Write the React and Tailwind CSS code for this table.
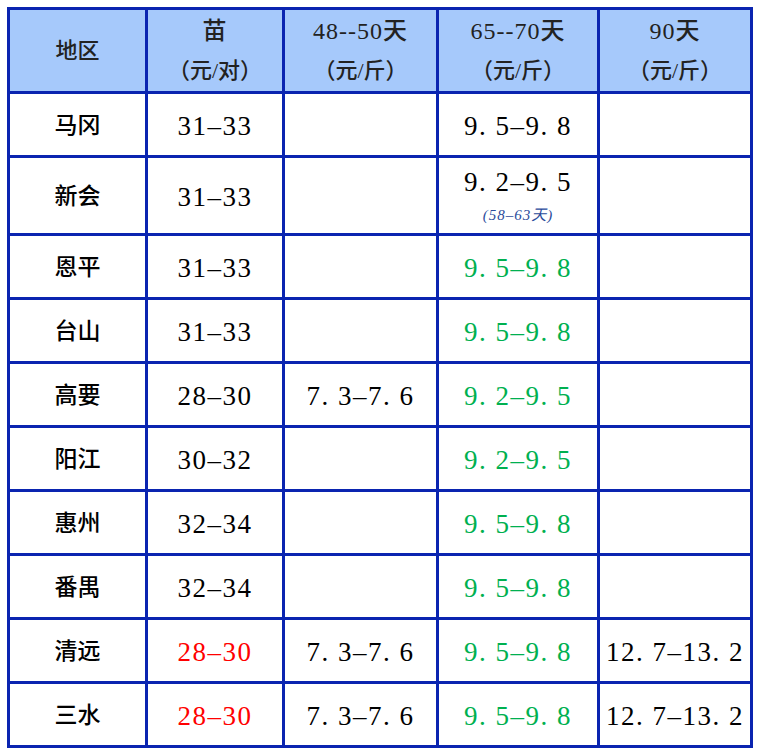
import React from 'react';

const rows = [
    { area: '马冈', seed: '31–33', a: '', b: '9. 5–9. 8', c: '' },
    { area: '新会', seed: '31–33', a: '', b: '9. 2–9. 5', c: '', note: '(58–63天)' },
    { area: '恩平', seed: '31–33', a: '', b: '9. 5–9. 8', bGreen: true, c: '' },
    { area: '台山', seed: '31–33', a: '', b: '9. 5–9. 8', bGreen: true, c: '' },
    { area: '高要', seed: '28–30', a: '7. 3–7. 6', b: '9. 2–9. 5', bGreen: true, c: '' },
    { area: '阳江', seed: '30–32', a: '', b: '9. 2–9. 5', bGreen: true, c: '' },
    { area: '惠州', seed: '32–34', a: '', b: '9. 5–9. 8', bGreen: true, c: '' },
    { area: '番禺', seed: '32–34', a: '', b: '9. 5–9. 8', bGreen: true, c: '' },
    { area: '清远', seed: '28–30', seedRed: true, a: '7. 3–7. 6', b: '9. 5–9. 8', bGreen: true, c: '12. 7–13. 2' },
    { area: '三水', seed: '28–30', seedRed: true, a: '7. 3–7. 6', b: '9. 5–9. 8', bGreen: true, c: '12. 7–13. 2' },
];

const serif = { fontFamily: '"Liberation Serif", "Noto Sans CJK SC", serif' };

const App = () => {
    const cell = 'border-[3px] border-[#0a24b0] text-center align-middle p-0';

    // header cell: top line (larger numbers) and unit line
    const Head = ({ top, unit }) => (
        <th className={cell + ' font-medium'}>
            <div className="text-[24px] tracking-[1px] leading-[40px]">{top}</div>
            <div className="text-[22px] leading-[40px]">{unit}</div>
        </th>
    );

    return (
        <div className="w-[761px] h-[755px] bg-white pt-[7px] pl-[7px]">
            <table className="border-collapse table-fixed" style={serif}>
                <colgroup>
                    <col className="w-[138px]" />
                    <col className="w-[137px]" />
                    <col className="w-[154px]" />
                    <col className="w-[161px]" />
                    <col className="w-[153px]" />
                </colgroup>
                <thead>
                    <tr className="h-[84px] bg-[#a6c9fb] text-[#222]">
                        <th className={cell + ' font-medium text-[22px]'}>地区</th>
                        <Head top="苗" unit="（元/对）" />
                        <Head top="48--50天" unit="（元/斤）" />
                        <Head top="65--70天" unit="（元/斤）" />
                        <Head top="90天" unit="（元/斤）" />
                    </tr>
                </thead>
                <tbody className="text-[27px] tracking-[1.5px] text-black">
                    {rows.map((r) => (
                        <tr key={r.area} className={r.note ? 'h-[78px]' : 'h-[64px]'}>
                            <td className={cell + ' pt-[3px] text-[23px] tracking-normal font-medium'}>{r.area}</td>
                            <td className={cell + ' pt-[3px]' + (r.seedRed ? ' text-[#ff0000]' : '')}>{r.seed}</td>
                            <td className={cell + ' pt-[3px]'}>{r.a}</td>
                            <td className={cell + ' pt-[3px]' + (r.bGreen ? ' text-[#00b050]' : '')}>
                                {r.note ? (
                                    <div className="flex flex-col items-center">
                                        <span className="leading-[30px] mt-[-4px]">{r.b}</span>
                                        <span className="text-[15px] tracking-[1px] italic text-[#2a4b9b] leading-[18px] mt-[9px]">{r.note}</span>
                                    </div>
                                ) : r.b}
                            </td>
                            <td className={cell + ' pt-[3px]'}>{r.c}</td>
                        </tr>
                    ))}
                </tbody>
            </table>
        </div>
    );
};

export default App;
